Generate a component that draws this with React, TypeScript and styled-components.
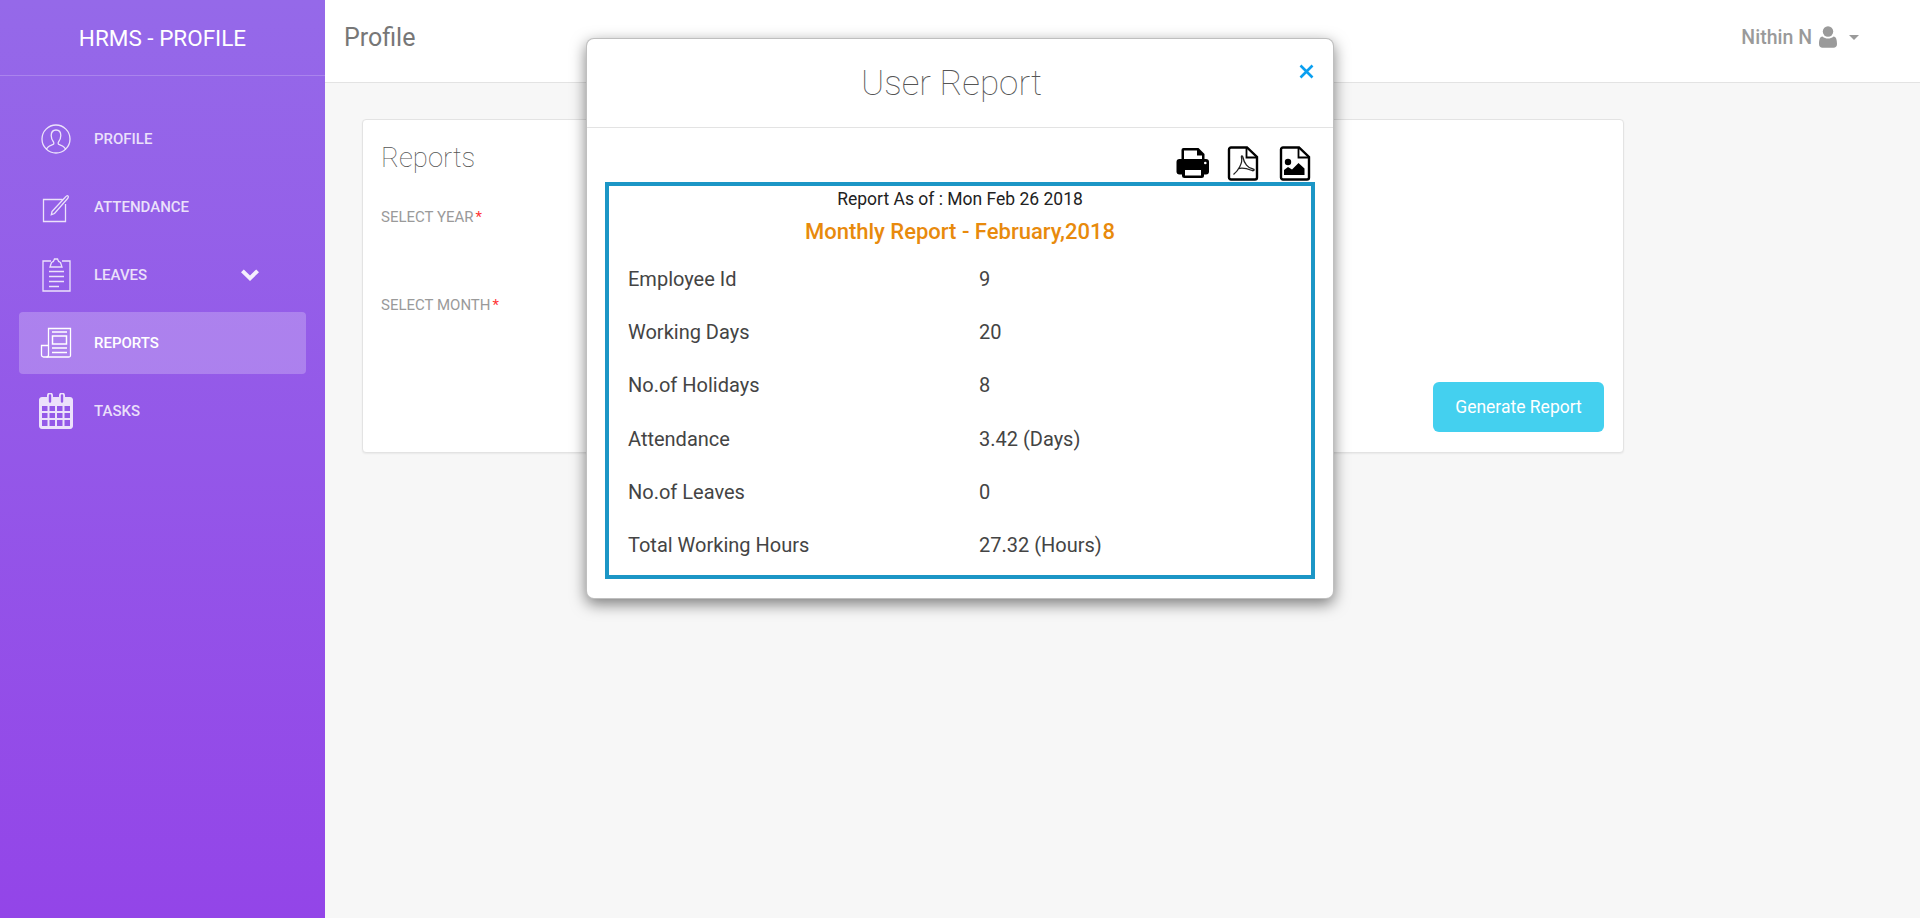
import React from "react";
import styled, { createGlobalStyle } from "styled-components";

const GlobalStyle = createGlobalStyle`
  * { box-sizing: border-box; }
  html, body { margin: 0; height: 100%; }
  body {
    font-family: Roboto, "Liberation Sans", sans-serif;
    background: #f7f7f7;
    color: #333;
  }
`;

const ProfileIcon = () => (
  <svg width="32" height="32" viewBox="0 0 32 32" fill="none" stroke="currentColor" strokeWidth="1.3">
    <circle cx="16" cy="16" r="14" />
    <path d="M6.5 26.3c.6-3 3.6-3.6 6.6-4.9.9-.5.9-1.6.4-2.4-1.500-1.900-2.300-4-2.300-6.500 0-3.300 2-5.500 4.800-5.500s4.800 2.200 4.800 5.500c0 2.500-.8 4.600-2.300 6.500-.5.8-.5 1.900.4 2.400 3 1.300 6 1.900 6.600 4.900" />
  </svg>
);

const AttendanceIcon = () => (
  <svg width="32" height="32" viewBox="0 0 32 32" fill="none" stroke="currentColor" strokeWidth="1.3">
    <path d="M22.500 8.500H3.500v22h22V13" />
    <path d="M12 20.500 25 6.500c1-1.200 2.200-2.300 3-1.600s.2 2-.8 3.100L14.500 22.500l-3.200 1.200z" />
  </svg>
);

const LeavesIcon = () => (
  <svg width="32" height="36" viewBox="0 0 32 36" fill="none" stroke="currentColor" strokeWidth="1.3">
    <path d="M11 4H3v30h27V4h-8" />
    <path d="M10 10l1.500-4.500c1.500-.5 2.500-1 3-3.500h3c.5 2.500 1.500 3 3 3.500L22 10z" />
    <path d="M9 14.500h15M9 19.500h15M9 24.500h15M9 29.500h10" />
  </svg>
);

const ReportsIcon = () => (
  <svg width="32" height="32" viewBox="0 0 32 32" fill="none" stroke="currentColor" strokeWidth="1.3">
    <path d="M8.500 28V1.500h22v27c0 1-.6 1.500-1.500 1.500H3.500C2.300 30 1.500 29 1.500 28V18.500h7" />
    <path d="M8.500 28c0 1-.8 2-2 2" />
    <path d="M12 5h15M12 21h15M12 25.500h15" strokeWidth="1.500" />
    <rect x="12.500" y="9" width="14" height="8" strokeWidth="1.500" />
  </svg>
);

const TasksIcon = () => (
  <svg width="34" height="36" viewBox="0 0 34 36">
    <path
      fill="currentColor"
      fillRule="evenodd"
      d="M3 4h5V2.500a3 3 0 0 1 6 0V4h6V2.500a3 3 0 0 1 6 0V4h5c1.500 0 3 1.200 3 2.800V33c0 1.500-1 3-3 3H3c-2 0-3-1.500-3-3V6.800C0 5.200 1.500 4 3 4zM9.800 2.500v6a1.200 1.200 0 0 0 2.400 0v-6a1.200 1.200 0 0 0-2.400 0zm12 0v6a1.200 1.200 0 0 0 2.400 0v-6a1.200 1.200 0 0 0-2.400 0zM3 13v5h5.500v-5zm7.500 0v5h5.500v-5zm7.500 0v5h5.500v-5zm7.500 0v5H31v-5zM3 20v5h5.500v-5zm7.500 0v5h5.500v-5zm7.500 0v5h5.500v-5zm7.500 0v5H31v-5zM3 27v6h5.500v-6zm7.500 0v6h5.500v-6zm7.500 0v6h5.500v-6zm7.500 0v6H31v-6z"
    />
  </svg>
);

const ChevronIcon = () => (
  <svg width="18" height="12" viewBox="0 0 18 12" fill="currentColor">
    <path d="M9 12 0 3.200 2.800.4 9 6.500 15.200.4 18 3.200z" />
  </svg>
);

const UserIcon = () => (
  <svg width="18" height="22" viewBox="0 0 18 22" fill="currentColor">
    <circle cx="9" cy="5.500" r="5.200" />
    <path d="M3.500 10.500C5 12 7 12.500 9 12.500s4-.5 5.500-2c2.500 0 3.500 3 3.500 7.500 0 2.500-1.500 3.700-3.500 3.700h-11C1.500 21.700 0 20.500 0 18c0-4.500 1-7.500 3.500-7.500z" />
  </svg>
);

const PrintIcon = () => (
  <svg width="34" height="34" viewBox="0 0 34 34" fill="#000">
    <g transform="translate(1.500 2)">
      <path d="M5 13V2a2 2 0 0 1 2-2h15l6 6v7z" />
      <path fill="#fff" d="M7.500 13V2.500h13v5h5V13z" />
      <rect x="0" y="11" width="32.500" height="15.500" rx="3" />
      <rect x="5.500" y="19" width="22" height="11" rx="2.500" />
      <rect x="8.500" y="22" width="16" height="5.500" fill="#fff" />
      <circle cx="28.800" cy="15" r="1.300" fill="#fff" />
    </g>
  </svg>
);

const FileOutline = () => (
  <>
    <path fill="none" stroke="#000" strokeWidth="2.400" d="M6 1.500h16l10 9.500v20.500a2 2 0 0 1-2 2H6a2 2 0 0 1-2-2v-28a2 2 0 0 1 2-2z" />
    <path fill="none" stroke="#000" strokeWidth="1.800" d="M21.500 2v9.500H32" />
  </>
);

const PdfIcon = () => (
  <svg width="36" height="35" viewBox="0 0 36 35">
    <FileOutline />
    <path
      fill="none"
      stroke="#222"
      strokeWidth="1.300"
      d="M8.500 28.500C13 25 18 17 16.500 11.500c-.5-2 1-2.500 1.500 0C19 17 23 22.500 28 23c2 0 1 2.500-1 1.500-4-1.500-10-3.500-14-1.500"
    />
  </svg>
);

const ImageFileIcon = () => (
  <svg width="36" height="35" viewBox="0 0 36 35">
    <FileOutline />
    <circle cx="11" cy="16" r="3.200" fill="#000" />
    <path fill="#000" d="M7 29v-5l4-3 4 2.500 6.500-6.500 6 5.500V29z" />
  </svg>
);

const navItems = [
  { label: "PROFILE", icon: <ProfileIcon /> },
  { label: "ATTENDANCE", icon: <AttendanceIcon /> },
  { label: "LEAVES", icon: <LeavesIcon />, expandable: true },
  { label: "REPORTS", icon: <ReportsIcon />, active: true },
  { label: "TASKS", icon: <TasksIcon /> },
];

const reportRows = [
  ["Employee Id", "9"],
  ["Working Days", "20"],
  ["No.of Holidays", "8"],
  ["Attendance", "3.42 (Days)"],
  ["No.of Leaves", "0"],
  ["Total Working Hours", "27.32 (Hours)"],
];

export default function App() {
  return (
    <>
      <GlobalStyle />
      <Page>
        <Sidebar>
          <Brand>HRMS - PROFILE</Brand>
          <Nav>
            {navItems.map((item) => (
              <NavItem key={item.label} $active={item.active}>
                <NavIcon>{item.icon}</NavIcon>
                <NavLabel>{item.label}</NavLabel>
                {item.expandable && (
                  <Chevron>
                    <ChevronIcon />
                  </Chevron>
                )}
              </NavItem>
            ))}
          </Nav>
        </Sidebar>
        <Main>
          <TopBar>
            <PageTitle>Profile</PageTitle>
            <UserMenu>
              Nithin N
              <UserIcon />
              <Caret />
            </UserMenu>
          </TopBar>
          <Content>
            <Card>
              <CardTitle>Reports</CardTitle>
              <Field>
                SELECT YEAR<Required>*</Required>
              </Field>
              <Field>
                SELECT MONTH<Required>*</Required>
              </Field>
              <CardFooter>
                <GenerateButton>Generate Report</GenerateButton>
              </CardFooter>
            </Card>
          </Content>
        </Main>
        <Modal>
          <ModalHeader>
            <ModalTitle>User Report</ModalTitle>
            <CloseButton aria-label="close">
              <svg width="15" height="15" viewBox="0 0 15 15" stroke="currentColor" strokeWidth="2.600">
                <path d="M1.500 1.500l12 12M13.500 1.500l-12 12" />
              </svg>
            </CloseButton>
          </ModalHeader>
          <ModalBody>
            <ExportBar>
              <PrintIcon />
              <PdfIcon />
              <ImageFileIcon />
            </ExportBar>
            <ReportBox>
              <ReportDate>Report As of : Mon Feb 26 2018</ReportDate>
              <ReportHeading>Monthly Report - February,2018</ReportHeading>
              <ReportRows>
                {reportRows.map(([name, value]) => (
                  <ReportRow key={name}>
                    <span>{name}</span>
                    <span>{value}</span>
                  </ReportRow>
                ))}
              </ReportRows>
            </ReportBox>
          </ModalBody>
        </Modal>
      </Page>
    </>
  );
}

const Page = styled.div`
  position: relative;
  display: flex;
  height: 918px;
  overflow: hidden;
`;

const Sidebar = styled.aside`
  width: 325px;
  flex: none;
  color: #fff;
  background: linear-gradient(180deg, #9569e9 0%, #9345e8 100%);
`;

const Brand = styled.div`
  height: 76px;
  padding-top: 24px;
  text-align: center;
  font-size: 22.500px;
  line-height: 28px;
  border-bottom: 1px solid rgba(255, 255, 255, 0.2);
`;

const Nav = styled.nav`
  display: flex;
  flex-direction: column;
  gap: 6px;
  padding: 32px 19px 0;
`;

const NavItem = styled.div<{ $active?: boolean }>`
  display: flex;
  align-items: center;
  height: 62px;
  padding-left: 20px;
  border-radius: 4px;
  background: ${({ $active }) => ($active ? "rgba(255, 255, 255, 0.23)" : "transparent")};
  color: ${({ $active }) => ($active ? "#fff" : "rgba(255, 255, 255, 0.82)")};
`;

const NavIcon = styled.span`
  display: flex;
  align-items: center;
  justify-content: center;
  width: 34px;
  margin-right: 21px;
`;

const NavLabel = styled.span`
  font-size: 15px;
  font-weight: 500;
`;

const Chevron = styled.span`
  display: flex;
  margin-left: auto;
  margin-right: 47px;
  color: rgba(255, 255, 255, 0.9);
`;

const Main = styled.div`
  flex: 1;
  min-width: 0;
`;

const TopBar = styled.header`
  display: flex;
  align-items: center;
  justify-content: space-between;
  height: 83px;
  padding: 0 61px 8px 19px;
  background: #fff;
  border-bottom: 1px solid #e3e3e3;
`;

const PageTitle = styled.h1`
  margin: 0;
  font-size: 25px;
  font-weight: 400;
  color: #777;
`;

const UserMenu = styled.div`
  display: flex;
  align-items: center;
  gap: 7px;
  font-size: 19.500px;
  font-weight: 500;
  color: #9a9a9a;
`;

const Caret = styled.span`
  width: 0;
  height: 0;
  margin-left: 5px;
  border-top: 5px solid #9a9a9a;
  border-left: 5px solid transparent;
  border-right: 5px solid transparent;
`;

const Content = styled.main`
  padding: 36px 0 0 37px;
`;

const Card = styled.section`
  display: flex;
  flex-direction: column;
  width: 1262px;
  height: 334px;
  padding: 22px 19px 20px 18px;
  background: #fff;
  border: 1px solid #e3e3e3;
  border-radius: 4px;
  box-shadow: 0 1px 2px rgba(0, 0, 0, 0.06);
`;

const CardTitle = styled.h2`
  margin: 0 0 33px;
  font-size: 27.500px;
  line-height: 32px;
  font-weight: 100;
  color: #555;
`;

const Field = styled.label`
  display: block;
  height: 90px;
  font-size: 15px;
  line-height: 20px;
  color: #9a9a9a;
`;

const Required = styled.span`
  margin-left: 2px;
  color: #ff3636;
`;

const CardFooter = styled.div`
  display: flex;
  justify-content: flex-end;
  margin-top: auto;
`;

const GenerateButton = styled.button`
  width: 171px;
  height: 50px;
  border: 0;
  border-radius: 6px;
  background: #44d0ef;
  color: #fff;
  font-family: inherit;
  font-size: 17.500px;
`;

const Modal = styled.div`
  position: absolute;
  top: 38px;
  left: 586px;
  width: 748px;
  height: 561px;
  background: #fff;
  border-radius: 8px;
  border: 1px solid rgba(0, 0, 0, 0.25);
  box-shadow: 0 5px 15px rgba(0, 0, 0, 0.5);
`;

const ModalHeader = styled.div`
  position: relative;
  height: 89px;
  padding-right: 17px;
  border-bottom: 1px solid #e3e3e3;
  text-align: center;
`;

const ModalTitle = styled.h3`
  margin: 0;
  padding-top: 23px;
  font-size: 35px;
  line-height: 44px;
  font-weight: 100;
  color: #555;
`;

const CloseButton = styled.button`
  position: absolute;
  top: 25px;
  right: 19px;
  display: flex;
  padding: 0;
  border: 0;
  background: none;
  color: #0a9ff0;
`;

const ModalBody = styled.div`
  padding: 16px 18px 0;
`;

const ExportBar = styled.div`
  display: flex;
  justify-content: flex-end;
  align-items: center;
  gap: 16px;
  height: 38px;
  padding-right: 2px;
`;

const ReportBox = styled.div`
  height: 397px;
  border: 4px solid #1c96c6;
  text-align: center;
`;

const ReportDate = styled.div`
  padding-top: 2px;
  font-size: 17.500px;
  line-height: 22px;
  color: #222;
`;

const ReportHeading = styled.div`
  margin-top: 8px;
  font-size: 22px;
  line-height: 28px;
  font-weight: 500;
  color: #e88a0c;
`;

const ReportRows = styled.div`
  margin-top: 6.500px;
  text-align: left;
`;

const ReportRow = styled.div`
  display: grid;
  grid-template-columns: 351px 1fr;
  align-items: center;
  height: 53.200px;
  padding-left: 19px;
  font-size: 20px;
  color: #444;
`;
